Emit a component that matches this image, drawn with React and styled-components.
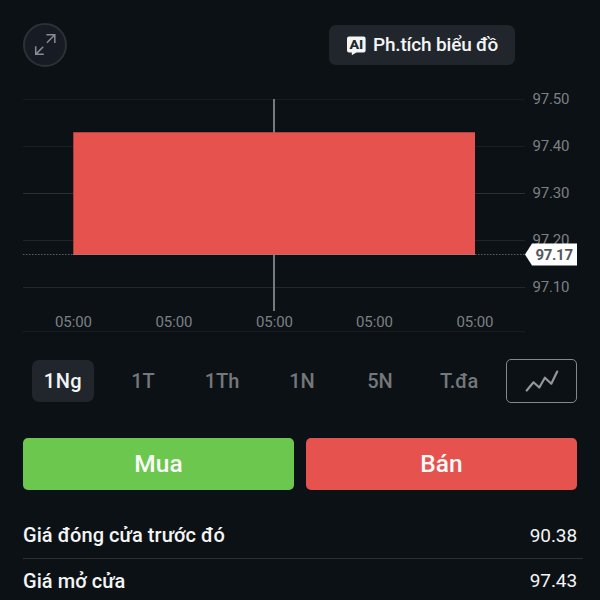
import React from 'react';
import styled, { createGlobalStyle } from 'styled-components';

const Global = createGlobalStyle`
  * { box-sizing: border-box; }
  body { margin: 0; background: #0c1115; }
`;

const Page = styled.main`
  display: flex;
  flex-direction: column;
  width: 600px;
  height: 600px;
  overflow: hidden;
  background: #0c1115;
  color: #f4f5f5;
  font-family: Roboto, 'Noto Sans', sans-serif;
`;

const Header = styled.header`
  display: flex;
  align-items: center;
  justify-content: space-between;
  height: 90px;
  flex: none;
  padding: 0 85px 0 23px;
`;

const RoundButton = styled.button`
  display: flex;
  align-items: center;
  justify-content: center;
  width: 44px;
  height: 44px;
  padding: 0;
  border: 2px solid #2d3136;
  border-radius: 50%;
  background: #171b24;
`;

const AnalyzeButton = styled.button`
  display: flex;
  align-items: center;
  width: 186px;
  height: 40px;
  padding: 0 0 1px 17px;
  gap: 6px;
  border: 0;
  border-radius: 7px;
  background: #20262c;
  color: #f4f5f5;
  font: 500 19px Roboto, sans-serif;
  letter-spacing: -0.18px;
  white-space: nowrap;
`;

const Chart = styled.svg`
  display: block;
  flex: none;
  width: 600px;
  height: 250px;
`;

const AxisText = styled.text`
  fill: #7d8083;
  font: 400 15px Roboto, sans-serif;
`;

const PriceText = styled.text`
  fill: #55585b;
  font: 700 15px Roboto, sans-serif;
`;

const BadgeText = styled.text`
  fill: #20262c;
  font: 800 13px Roboto, sans-serif;
`;

const Ranges = styled.nav`
  display: flex;
  align-items: center;
  height: 44px;
  flex: none;
  margin: 19px 23px 0;
`;

const RangeTab = styled.button`
  width: ${(p) => p.$width}px;
  height: 42px;
  padding: 0 0 1px;
  border: 0;
  margin-left: ${(p) => p.$gap}px;
  border-radius: 7px;
  background: ${(p) => (p.$active ? '#20262c' : 'transparent')};
  color: ${(p) => (p.$active ? '#f4f5f5' : '#74777b')};
  font: 500 20px Roboto, sans-serif;
  letter-spacing: ${(p) => (p.$active ? '0.5px' : '-0.1px')};
`;

const ChartTypeButton = styled.button`
  display: flex;
  align-items: center;
  justify-content: center;
  width: 71px;
  height: 44px;
  margin-left: auto;
  padding: 0;
  border: 1px solid #85898b;
  border-radius: 5px;
  background: transparent;
`;

const Actions = styled.div`
  display: grid;
  grid-template-columns: 1fr 1fr;
  gap: 12px;
  height: 52px;
  flex: none;
  margin: 35px 23px 0;
`;

const TradeButton = styled.button`
  padding: 0 0 1px;
  border: 0;
  border-radius: 5px;
  background: ${(p) => p.$color};
  color: #f9faf8;
  font: 500 24.5px Roboto, sans-serif;
`;

const Stats = styled.dl`
  margin: 22px 17px 0 23px;
`;

const StatRow = styled.div`
  display: flex;
  align-items: center;
  justify-content: space-between;
  height: 47px;
  padding-right: 6px;
  border-bottom: 1px solid #2c3034;

  & + & {
    height: 44px;
  }
`;

const StatName = styled.dt`
  font-size: 20px;
  font-weight: 500;
  letter-spacing: 0.06px;
`;

const StatValue = styled.dd`
  margin: 0;
  font-size: 19px;
  letter-spacing: -0.1px;
`;

const prices = [
  ['97.50', 9.5, '#171c20'],
  ['97.40', 56.5, '#191e22'],
  ['97.30', 103.5, '#2a2e32'],
  ['97.20', 150.5, '#202428'],
  ['97.10', 197.5, '#25292d'],
];

const times = [73.5, 174, 274.5, 374.5, 475];

const ranges = [
  ['1Ng', 62, 9],
  ['1T', 60, 19],
  ['1Th', 60, 19],
  ['1N', 60, 20],
  ['5N', 60, 18],
  ['T.đa', 60, 19],
];

function ExpandIcon() {
  return (
    <svg width="24" height="24" viewBox="0 0 24 24" fill="none" stroke="#888b90" strokeWidth="1.5">
      <path d="M13.9 9.7 21.8 1.8M13.4 1.8h8.4v8.1M10.2 13.8l-7.3 7.3M2.7 13.2v8.1h8.1" />
    </svg>
  );
}

function AiIcon() {
  return (
    <svg width="21" height="20" viewBox="0 0 21 20">
      <path d="M3 1.5h14.6a2 2 0 0 1 2 2v12a2 2 0 0 1-2 2h-7.2L5.8 20.2v-2.7H3a2 2 0 0 1-2-2v-12a2 2 0 0 1 2-2Z" fill="#f4f5f5" />
      <BadgeText x="3.6" y="14.2" textLength="13.5" lengthAdjust="spacingAndGlyphs">AI</BadgeText>
    </svg>
  );
}

function TrendIcon() {
  return (
    <svg width="34" height="24" viewBox="0 0 34 24" fill="none" stroke="#94979a" strokeWidth="2.2" strokeLinecap="round" strokeLinejoin="round">
      <path d="m1.7 21.5 6.8-8.2 5.8 5.2 5.6-9.8 6.4 6L32.2 2.6" />
    </svg>
  );
}

function PriceChart() {
  return (
    <Chart viewBox="0 0 600 250">
      {prices.map(([label, y, color]) => (
        <g key={label}>
          <path d={`M23 ${y}H525`} stroke={color} />
          <AxisText x="532.5" y={y + 4.5} textLength="37">{label}</AxisText>
        </g>
      ))}
      <path d="M23 241.5H525" stroke="#181d21" />
      <path d="M274 9V221" stroke="#777a7d" strokeWidth="2" />
      <path d="M73.3 42.3H475V164.7H73.3Z" fill="#e6534e" />
      <path d="M73 164.5H475" stroke="#b8706d" />
      <path d="M23 164.5H73M475 164.5H526" stroke="#5b5f62" strokeDasharray="1.5 1.5" />
      <path d="M525 164.5 532 153.5H577V175.5H532Z" fill="#fff" />
      <PriceText x="535.5" y="170.2" textLength="37.5">97.17</PriceText>
      {times.map((x) => (
        <AxisText key={x} x={x} y="237" textAnchor="middle" textLength="37">05:00</AxisText>
      ))}
    </Chart>
  );
}

export default function App() {
  return (
    <Page>
      <Global />
      <Header>
        <RoundButton aria-label="Mở rộng"><ExpandIcon /></RoundButton>
        <AnalyzeButton><AiIcon />Ph.tích biểu đồ</AnalyzeButton>
      </Header>
      <PriceChart />
      <Ranges>
        {ranges.map(([label, width, gap], i) => (
          <RangeTab key={label} $width={width} $gap={gap} $active={i === 0}>{label}</RangeTab>
        ))}
        <ChartTypeButton aria-label="Loại biểu đồ"><TrendIcon /></ChartTypeButton>
      </Ranges>
      <Actions>
        <TradeButton $color="#6cc74e">Mua</TradeButton>
        <TradeButton $color="#e6534e">Bán</TradeButton>
      </Actions>
      <Stats>
        <StatRow><StatName>Giá đóng cửa trước đó</StatName><StatValue>90.38</StatValue></StatRow>
        <StatRow><StatName>Giá mở cửa</StatName><StatValue>97.43</StatValue></StatRow>
      </Stats>
    </Page>
  );
}
